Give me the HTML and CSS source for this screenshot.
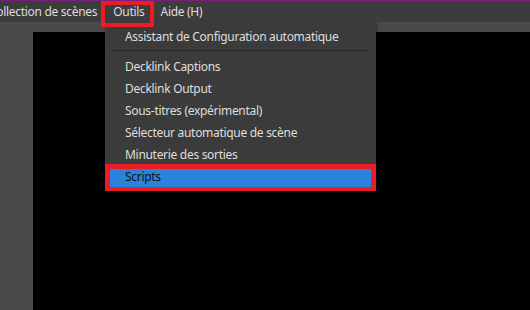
FILE: index.html
```html
<!DOCTYPE html>
<html lang="fr">
<head>
    <meta charset="UTF-8">
    <title>OBS - Outils</title>
    <link rel="stylesheet" href="styles.css">
</head>
<body>

<div class="window">
    <div class="menubar">
        <span class="menubar-item first">Collection de scènes</span>
        <span class="menubar-item open">Outils</span>
        <span class="menubar-item">Aide (H)</span>
    </div>

    <div class="main">
        <div class="dock"></div>
        <div class="preview-wrap">
            <div class="preview"></div>
        </div>
    </div>

    <!-- open "Outils" menu -->
    <div class="dropdown">
        <div class="dropdown-item">Assistant de Configuration automatique</div>
        <div class="separator"></div>
        <div class="dropdown-item">Decklink Captions</div>
        <div class="dropdown-item">Decklink Output</div>
        <div class="dropdown-item">Sous-titres (expérimental)</div>
        <div class="dropdown-item">Sélecteur automatique de scène</div>
        <div class="dropdown-item">Minuterie des sorties</div>
        <div class="dropdown-item active">Scripts</div>
    </div>

    <!-- red highlight marks -->
    <div class="mark mark-menu"></div>
    <div class="mark mark-scripts"></div>
</div>

</body>
</html>
```

FILE: styles.css
```css
body {
    margin: 0;
    padding: 0;
    background-color: #000;
    font-family: "Noto Sans", "Open Sans", sans-serif;
    font-size: 12px;
    letter-spacing: -0.3px;
}
.window {
    position: relative;
    width: 530px;
    height: 310px;
    overflow: hidden;
    display: flex;
    flex-direction: column;
    border-top: 1px solid #7a1f7a;
    box-sizing: border-box;
}
.menubar {
    display: flex;
    height: 21px;
    align-items: center;
    background-color: #3c3c3c;
    color: #dcdcdc;
}
.menubar-item {
    padding: 0 8px;
    white-space: nowrap;
}
.menubar-item.first {
    margin-left: -19px;
}
.main {
    flex: 1;
    display: flex;
    background-color: #4a4a4a;
}
.dock {
    width: 33px;
}
.preview-wrap {
    flex: 1;
    display: flex;
    padding-top: 10px;
}
.preview {
    flex: 1;
    background-color: #000;
}

/* dropdown */
.dropdown {
    position: absolute;
    left: 105px;
    top: 21px;
    width: 271px;
    padding: 4px 0 3px;
    background-color: #3b3b3b;
    color: #dedede;
    box-shadow: 1px 1px 2px rgba(0, 0, 0, 0.4);
}
.dropdown-item {
    height: 22px;
    line-height: 22px;
    padding-left: 20px;
    white-space: nowrap;
}
.dropdown-item.active {
    background-color: #2a82da;
    color: #111;
}
.separator {
    height: 1px;
    margin: 2px 7px 5px 5px;
    background-color: #262626;
}

/* annotations */
.mark {
    position: absolute;
    border: 4px solid #ec1c24;
    box-sizing: border-box;
}
.mark-menu {
    left: 101px;
    top: 0;
    width: 53px;
    height: 26px;
}
.mark-scripts {
    left: 105px;
    top: 163px;
    width: 271px;
    height: 27px;
    border-width: 5px 5px 4px 5px;
}
```
